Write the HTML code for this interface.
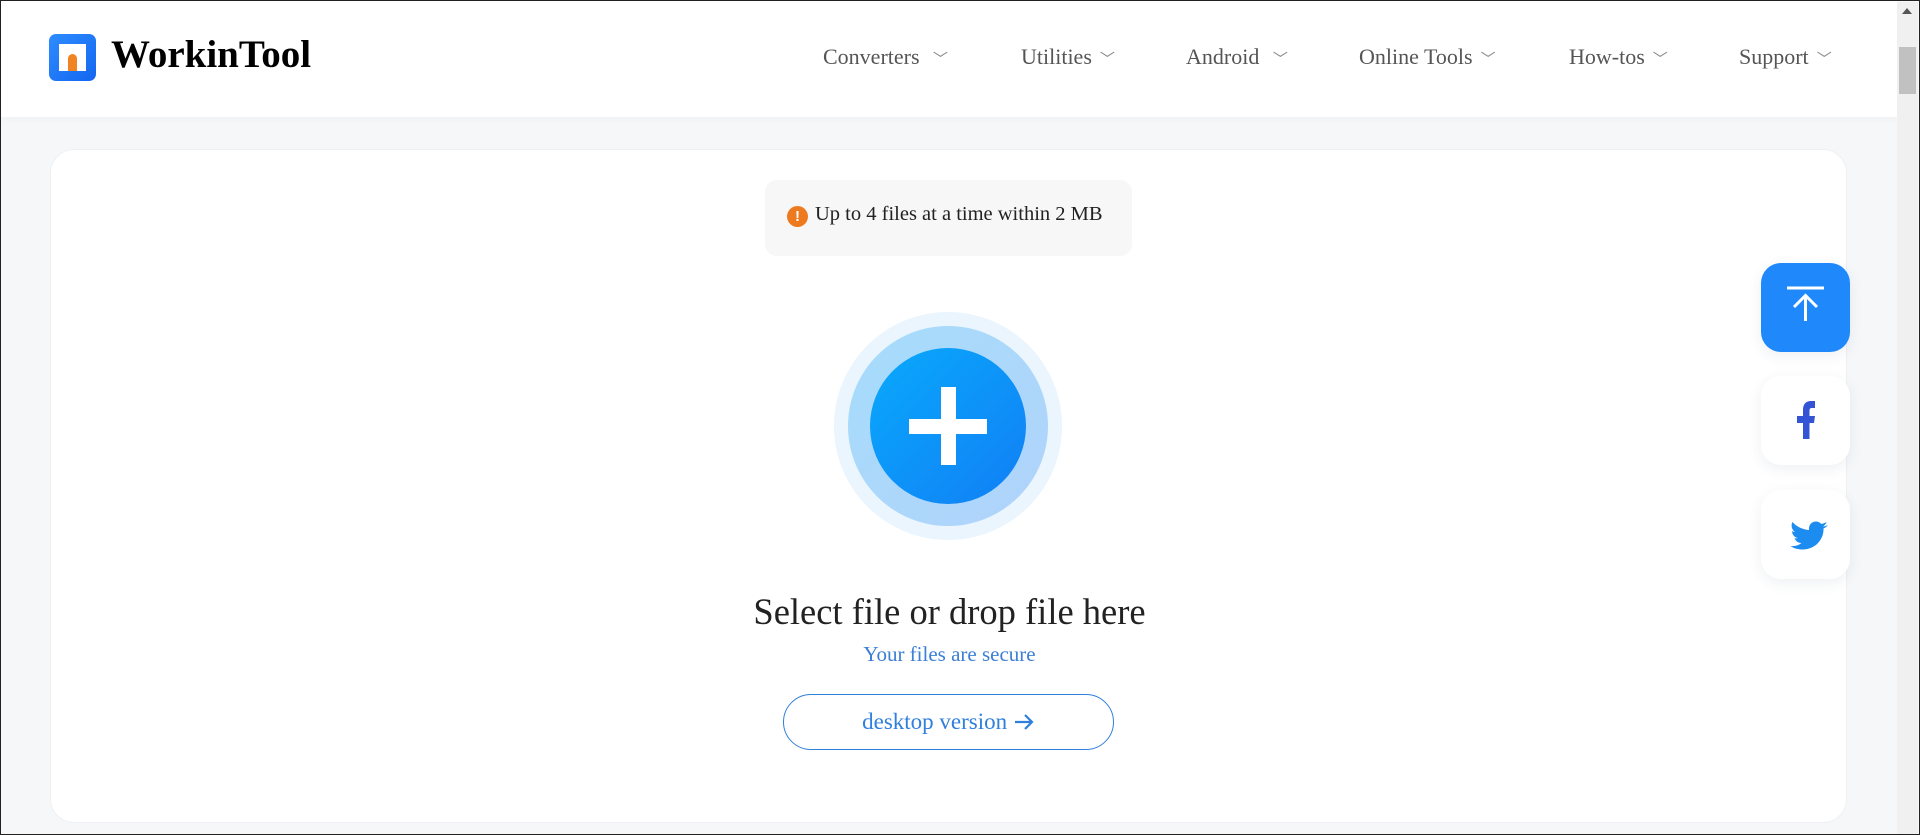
<!DOCTYPE html>
<html><head><meta charset="utf-8"><style>
*{margin:0;padding:0;box-sizing:border-box}
body{width:1920px;height:835px;overflow:hidden;background:#f5f7f9;font-family:"Liberation Serif",serif;position:relative;border:1px solid #222}
.hdr{position:absolute;left:0;top:0;width:1897px;height:116px;background:#fff;box-shadow:0 2px 8px rgba(0,0,0,.03)}
.logo{position:absolute;left:48px;top:33px;width:47px;height:47px;border-radius:7px;background:linear-gradient(135deg,#2d8cff,#1466f0)}
.logo i{position:absolute;left:10px;top:10px;width:27px;height:27px;background:#fff}
.logo b{position:absolute;left:19px;top:20px;width:9px;height:17px;background:#f08423;border-radius:5px 5px 0 0}
.brand{position:absolute;left:110px;top:31px;font-size:39px;font-weight:bold;color:#000}
.nav{position:absolute;top:43px;font-size:22px;color:#555}
.nav span{font-size:15px;color:#888;margin-left:8px}
.sb{position:absolute;right:1px;top:1px;width:21px;height:832px;background:#f0f0f0}
.sb .th{position:absolute;left:2px;top:45px;width:17px;height:47px;background:#c1c1c1}
.card{position:absolute;left:49px;top:148px;width:1797px;height:674px;background:#fff;border:1px solid #eef0f3;border-radius:24px}
.note{position:absolute;left:764px;top:179px;width:367px;height:76px;background:#f7f7f7;border-radius:12px;font-size:20.5px;color:#222}
.note .ic{position:absolute;left:22px;top:26px;width:21px;height:21px;border-radius:50%;background:#ee7a1f;color:#fff;font:bold 15px/21px "Liberation Sans",sans-serif;text-align:center}
.note .t{position:absolute;left:50px;top:23px}
.c1{position:absolute;left:833px;top:311px;width:228px;height:228px;border-radius:50%;background:#eaf5fe}
.c2{position:absolute;left:847px;top:325px;width:200px;height:200px;border-radius:50%;background:linear-gradient(135deg,#a6dcfb,#b1d3fb)}
.c3{position:absolute;left:869px;top:347px;width:156px;height:156px;border-radius:50%;background:linear-gradient(135deg,#09a9fc,#117ff5)}
.ph{position:absolute;left:908px;top:418px;width:78px;height:15px;background:#fff}
.pv{position:absolute;left:940px;top:386px;width:15px;height:78px;background:#fff}
.sel{position:absolute;left:0;width:1897px;top:589px;text-align:center;font-size:36.5px;color:#222}
.sec{position:absolute;left:0;width:1897px;top:641px;text-align:center;font-size:21px;color:#3b7fd6}
.btn{position:absolute;left:782px;top:693px;width:331px;height:56px;border:1px solid #2f80de;border-radius:28px;text-align:center;line-height:54px;font-size:23px;color:#2f7fdc}
.sd{position:absolute;left:1760px;width:89px;height:89px;border-radius:20px;background:#fff;box-shadow:0 4px 14px rgba(40,60,100,.08)}
</style></head><body>
<div class="hdr">
<div class="logo"><i></i><b></b></div>
<div class="brand">WorkinTool</div>
<div class="nav" style="left:822px">Converters <span>﹀</span></div>
<div class="nav" style="left:1020px">Utilities<span>﹀</span></div>
<div class="nav" style="left:1185px">Android <span>﹀</span></div>
<div class="nav" style="left:1358px">Online Tools<span>﹀</span></div>
<div class="nav" style="left:1568px">How-tos<span>﹀</span></div>
<div class="nav" style="left:1738px">Support<span>﹀</span></div>
</div>
<div class="sb"><div style="position:absolute;left:5px;top:6px;border:5px solid transparent;border-bottom:6px solid #555;border-top:0"></div><div class="th"></div></div>
<div class="card"></div>
<div class="note"><div class="ic">!</div><div class="t">Up to 4 files at a time within 2 MB</div></div>
<div class="c1"></div><div class="c2"></div><div class="c3"></div><div class="ph"></div><div class="pv"></div>
<div class="sel">Select file or drop file here</div>
<div class="sec">Your files are secure</div>
<div class="btn">desktop version <svg width="22" height="18" viewBox="0 0 22 18" style="vertical-align:-2px"><path d="M2 9H19M12 2L19 9L12 16" fill="none" stroke="#2f7fdc" stroke-width="2.2"/></svg></div>
<div class="sd" style="top:262px;background:#1f88fb"><svg width="89" height="89" viewBox="0 0 89 89"><path d="M26 25H63M44.5 58V33M33 44L44.5 32.5L56 44" fill="none" stroke="#fff" stroke-width="3"/></svg></div>
<div class="sd" style="top:375px"><svg width="89" height="89" viewBox="0 0 89 89"><path d="M42 63V47H36V40H42V34C42 28 45 25 50 25H54V32H51C49 32 48.5 33 48.5 35V40H54L53 47H48.5V63Z" fill="#3454d6"/></svg></div>
<div class="sd" style="top:489px"><svg width="89" height="89" viewBox="0 0 89 89"><path d="M67 35C65 36 63.5 36.5 62 36.5C63.5 35.5 65 34 65.5 32C64 33 62 33.5 60.5 34C59 32.5 57 31.5 55 31.5C50.5 31.5 47.5 35 48 40C41 39.5 35.5 36.5 31.5 32C29.5 35.5 31 40 34 42C33 42 31.5 41.5 31 41C31 44.5 33.5 47.5 37 48C36 48.5 34.5 48.5 33.5 48C34.5 51 37 53 40.5 53C37.5 55.5 33.5 56.5 29.5 56C33 58.5 37.5 59.5 41.5 59.5C55 59.5 63 48.5 62.5 38.5C64.5 37.5 66 36.5 67 35Z" fill="#1d8cf0"/></svg></div>
</body></html>
